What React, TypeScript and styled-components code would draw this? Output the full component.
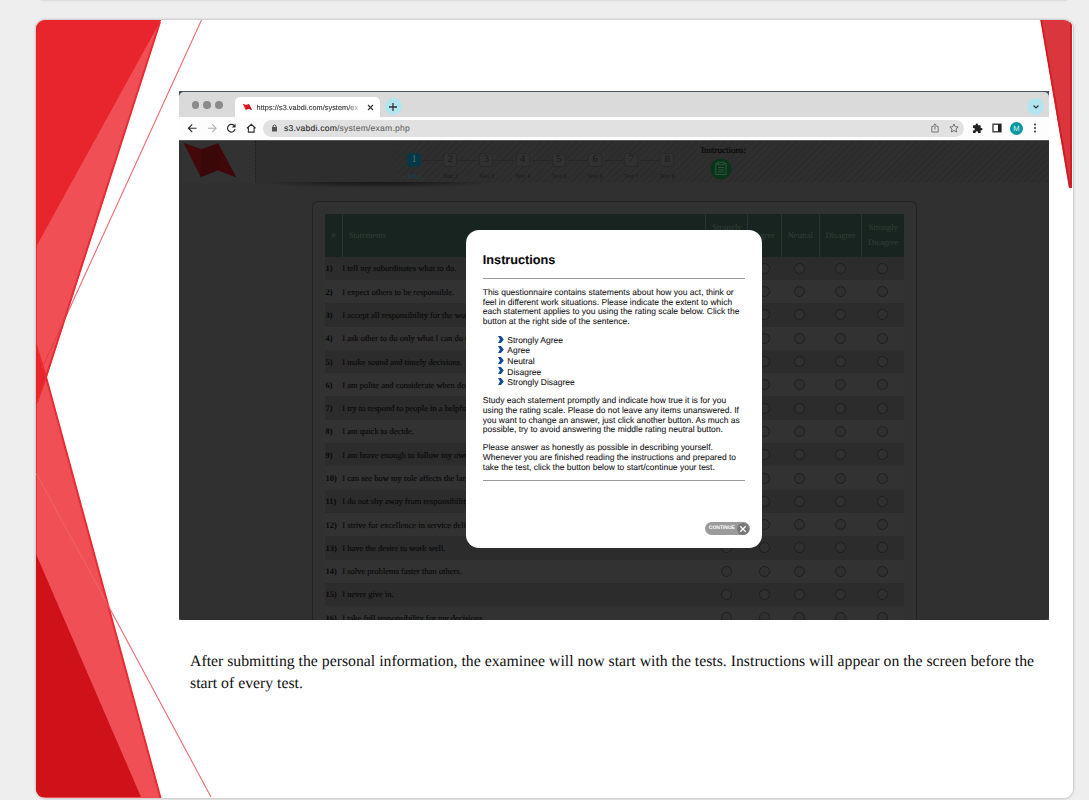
import React from "react";
import styled, { createGlobalStyle, css } from "styled-components";

const Global = createGlobalStyle`
  * { box-sizing: border-box; }
  body { margin: 0; background: #eeeeee; overflow: hidden; text-rendering: geometricPrecision; }
`;

const serif = css`font-family: "Liberation Serif", "Times New Roman", serif;`;
const sans = css`font-family: "Liberation Sans", Arial, sans-serif;`;

const Deck = styled.main`
  height: 800px;
  padding: 0 16px 0 35.5px;
  overflow: hidden;
  background: #eeeeee;
`;
const PreviousSlide = styled.div`
  height: 20px;
  &::before {
    content: "";
    display: block;
    height: 1px;
    margin: 0 6px 0 5px;
    background: #dedede;
    box-shadow: 0 0 2px #d8d8d8;
  }
`;
const Slide = styled.section`
  position: relative;
  height: 778px;
  padding: 70.5px 0 0 143.5px;
  border-radius: 9px;
  background: #fff;
  overflow: hidden;
`;
const SlideShadow = styled.div`
  border-radius: 9px;
  box-shadow: 0 0 3px rgba(0, 0, 0, 0.34);
`;
const Art = styled.svg`
  position: absolute;
  top: 0;
  left: -0.5px;
`;
const Browser = styled.div`
  position: relative;
  width: 870.4px;
  height: 529.5px;
  display: flex;
  flex-direction: column;
  background: #4a5561;
  padding-top: 1.5px;
  overflow: hidden;
`;
const TabBar = styled.div`
  display: flex;
  align-items: flex-end;
  height: 25px;
  background: #dadada;
  border-radius: 5px 5px 0 0;
  flex: none;
`;
const Lights = styled.div`
  display: flex;
  gap: 4.4px;
  padding: 0 12px 8.5px 12.5px;
  i { width: 7.6px; height: 7.6px; border-radius: 50%; background: #8b8b8b; }
`;
const Tab = styled.div`
  ${sans}
  display: flex;
  align-items: center;
  width: 145px;
  height: 20px;
  padding: 0 6px 0 8px;
  background: #fff;
  border-radius: 5px 5px 0 0;
  font-size: 7.3px;
  color: #333;
  svg:last-child { margin-left: auto; }
`;
const TabTitle = styled.span`
  margin-left: 4.5px;
  white-space: nowrap;
  letter-spacing: 0.06px;
  -webkit-text-stroke: 0.1px #333;
  mask-image: linear-gradient(to right, #000 90px, transparent 106px);
`;
const RoundButton = styled.div<{ $end?: boolean }>`
  display: flex;
  align-items: center;
  justify-content: center;
  width: 17px;
  height: 17px;
  border-radius: 50%;
  background: #b3e5f0;
  margin: ${(p) => (p.$end ? "0 5px 2px auto" : "0 0 2px 4.5px")};
`;
const Toolbar = styled.div`
  display: flex;
  align-items: center;
  height: 22.5px;
  flex: none;
  background: #fdfdfd;
  padding: 0 9px 0 8px;
`;
const NavIcons = styled.div`
  display: flex;
  gap: 9px;
  width: 76px;
  svg { width: 10.5px; height: 10.5px; }
`;
const Address = styled.div`
  ${sans}
  display: flex;
  align-items: center;
  width: 701px;
  height: 16.5px;
  padding: 0 5px 0 8px;
  border-radius: 9px;
  background: #e1e1e2;
  font-size: 8.6px;
  color: #666;
  b { font-weight: 400; color: #2c2c2c; }
  span { margin: 0 auto 0 6px; letter-spacing: 0.2px; -webkit-text-stroke: 0.1px currentColor; }
`;
const AddressIcons = styled.div`
  display: flex;
  gap: 9px;
`;
const ToolIcons = styled.div`
  display: flex;
  align-items: center;
  gap: 9px;
  margin-left: 8px;
`;
const Avatar = styled.div`
  ${sans}
  width: 13.5px;
  height: 13.5px;
  border-radius: 50%;
  background: #0b979f;
  color: #d7f5f5;
  font-size: 7.5px;
  line-height: 13.5px;
  text-align: center;
  margin: 0 1px 0 -1.5px;
`;
const Page = styled.div`
  ${serif}
  flex: 1;
  min-height: 0;
  background: #303030;
  border-top: 1px solid #555;
  border-radius: 0 0 4px 4px;
  overflow: hidden;
`;
const SiteHeader = styled.header`
  display: flex;
  height: 42px;
  background: linear-gradient(to right, #323232 0 76px, #2e2e2e 77px);
`;
const Brand = styled.div`
  width: 77px;
  padding: 2px 0 0 5px;
  border-right: 1px dotted #1c1c1c;
`;
const Plain = styled.div`
  position: relative;
  width: 140px;
  &::after {
    content: "";
    position: absolute;
    left: 1px;
    top: 41px;
    width: 240px;
    height: 6px;
    background: radial-gradient(ellipse 50% 100% at 50% 0, #161616, #222 50%, transparent);
  }
`;
const Striped = styled.div`
  display: flex;
  flex: 1;
  background: repeating-linear-gradient(135deg, #2f2f2f 0 2px, #2c2c2c 3px 4px, #2f2f2f 5px);
`;
const Steps = styled.div`
  display: flex;
  width: 304px;
  padding: 12.4px 0 0 0;
`;
const Step = styled.div<{ $on?: boolean }>`
  position: relative;
  width: 36.2px;
  flex: none;
  text-align: center;
  font-size: 6.2px;
  line-height: 8px;
  color: ${(p) => (p.$on ? "#0c4a60" : "#1b1b1b")};
  b {
    display: block;
    width: 14px;
    height: 14px;
    margin: 0 auto 6px;
    border-radius: 3px;
    border: 1px solid ${(p) => (p.$on ? "#083848" : "#282828")};
    background: ${(p) => (p.$on ? "#083848" : "#313131")};
    color: ${(p) => (p.$on ? "#4a6c77" : "#1a1a1a")};
    font-size: 10.5px;
    font-weight: 400;
    line-height: 12px;
  }
  &:not(:last-child)::after {
    content: "";
    position: absolute;
    left: 27px;
    top: 7px;
    width: 19px;
    height: 1px;
    background: #272727;
  }
`;
const Help = styled.div`
  display: flex;
  flex-direction: column;
  align-items: center;
  width: 47px;
  padding-top: 4.6px;
  font-size: 9px;
  line-height: 11px;
  color: #080808;
  -webkit-text-stroke: 0.2px #080808;
  svg { margin: 2px 5px 0 0; }
`;
const Panel = styled.div`
  width: 605px;
  height: 500px;
  margin: 18.2px 0 0 133px;
  padding: 12px 12px;
  border: 1px solid #222;
  border-radius: 6px;
  background: #313131;
`;
const columns = css`
  display: grid;
  grid-template-columns: 16.7px 363.6px 42.2px 33.5px 38px 42.5px 42.5px;
`;
const HeadRow = styled.div`
  ${columns}
  height: 43px;
  background: #18241f;
  color: #34403b;
  font-size: 8.5px;
  line-height: 15px;
`;
const HeadCell = styled.div<{ $left?: boolean }>`
  display: flex;
  align-items: center;
  justify-content: ${(p) => (p.$left ? "flex-start" : "center")};
  padding-left: ${(p) => (p.$left ? "6px" : "0")};
  text-align: center;
  border-left: 1px solid #2a3531;
  &:first-child { border-left: 0; }
`;
const Row = styled.div<{ $odd: boolean }>`
  ${columns}
  height: 23.3px;
  align-items: center;
  background: ${(p) => (p.$odd ? "#2c2c2c" : "#323232")};
  color: #090909;
  font-size: 8.5px;
  white-space: nowrap;
  b { padding-left: 0.5px; }
  span { padding-left: 0.6px; -webkit-text-stroke: 0.12px #090909; }
`;
const Radio = styled.i`
  justify-self: center;
  width: 11px;
  height: 11px;
  border: 1px solid #1f1f1f;
  border-radius: 50%;
  background: #303030;
`;
const Modal = styled.div`
  ${sans}
  position: absolute;
  left: 286.8px;
  top: 139.5px;
  width: 296.2px;
  height: 317.5px;
  padding: 22.5px 17px 0 17px;
  border-radius: 13px;
  background: #fff;
  color: #1c1c1c;
  font-size: 8.49px;
  line-height: 9.7px;
  -webkit-text-stroke: 0.1px #1c1c1c;
  h1 { margin: 0 0 10px; font-size: 12.7px; line-height: 15px; color: #0a0a0a; }
`;
const Rule = styled.hr<{ $top?: number }>`
  height: 1px;
  margin: ${(p) => p.$top ?? 0}px 0 0;
  border: 0;
  background: #9a9a9a;
`;
const Paragraph = styled.p<{ $top?: number }>`
  margin: ${(p) => p.$top ?? 0}px 0 0;
  white-space: nowrap;
`;
const Scale = styled.ul`
  margin: 8px 0 8.4px;
  padding: 0 0 0 15.5px;
  list-style: none;
  line-height: 10.6px;
  li { display: flex; align-items: center; gap: 3px; }
  svg { margin-top: -2px; }
`;
const Continue = styled.div`
  display: flex;
  align-items: center;
  justify-content: space-between;
  width: 45.5px;
  height: 13.5px;
  margin: 40.5px 0 0 222px;
  padding: 0 1px 0 4px;
  border-radius: 7px;
  background: #9b9b9b;
  color: #fff;
  font-size: 5px;
  font-weight: 700;
  -webkit-text-stroke: 0;
`;
const Caption = styled.p`
  ${serif}
  margin: 31px 0 0 11px;
  font-size: 15.78px;
  line-height: 22px;
  color: #111;
  white-space: nowrap;
`;

const statements = [
  "I tell my subordinates what to do.",
  "I expect others to be responsible.",
  "I accept all responsibility for the work.",
  "I ask other to do only what I can do myself.",
  "I make sound and timely decisions.",
  "I am polite and considerate when dealing.",
  "I try to respond to people in a helpful way.",
  "I am quick to decide.",
  "I am brave enough to follow my own way.",
  "I can see how my role affects the larger team.",
  "I do not shy away from responsibility.",
  "I strive for excellence in service delivery.",
  "I have the desire to work well.",
  "I solve problems faster than others.",
  "I never give in.",
  "I take full responsibility for my decisions.",
];

const scale = ["Strongly Agree", "Agree", "Neutral", "Disagree", "Strongly Disagree"];

function SlideArt() {
  return (
    <Art width="1038" height="778" viewBox="35 20 1038 778">
      <path d="M35 20H161L46.5 378L161 798H35Z" fill="#ef4f55" />
      <path d="M35 20H161L36 247H35Z" fill="#e8252d" />
      <path d="M36 345L46.5 378L37 404H35Z" fill="#e8252d" />
      <path d="M160 22L46 377L37 402" fill="none" stroke="#ea2b33" strokeWidth="2" />
      <path d="M36 345L46 377L160.5 798" fill="none" stroke="#ea2b33" strokeWidth="2" />
      <path d="M36 20V798" stroke="#eb2029" strokeWidth="1.4" />
      <path d="M35 553L36 554L141 797H35Z" fill="#cf1219" />
      <path d="M201.5 20L68 312" stroke="#ee6a70" strokeWidth="1.1" />
      <path d="M68 312L42 368" stroke="#ea3b43" strokeWidth="1" />
      <path d="M36 473L109 607" stroke="#f06468" strokeWidth="1" />
      <path d="M109 607L211 797" stroke="#ee6a70" strokeWidth="1.1" />
      <path d="M1040.500 19H1072V188H1069Z" fill="#d9363d" />
      <path d="M1041 19L1070 187.500M1071 19V188" fill="none" stroke="#d41a22" strokeWidth="1.800" />
    </Art>
  );
}

function Bird({ size, dark }: { size: number; dark?: boolean }) {
  return (
    <svg width={size} height={size * 0.66} viewBox="0 0 52 34">
      <path d="M0 0L17 6L34 0L52 34L34 27L17 34Z" fill={dark ? "#3a0808" : "#e0141c"} />
      <path d="M17 6V34L0 0Z" fill={dark ? "#430809" : "#f0252c"} />
      <path d="M34 0L52 34L34 27Z" fill={dark ? "#400708" : "#c90e16"} />
    </svg>
  );
}

const line = { fill: "none", stroke: "#333", strokeWidth: 1.3 } as const;

export default function App() {
  return (
    <>
      <Global />
      <Deck>
        <PreviousSlide />
        <SlideShadow>
          <Slide>
            <SlideArt />
            <Browser>
              <TabBar>
                <Lights><i /><i /><i /></Lights>
                <Tab>
                  <Bird size={9} />
                  <TabTitle>https://s3.vabdi.com/system/ex</TabTitle>
                  <svg width="7" height="7" viewBox="0 0 7 7"><path d="M1 1L6 6M6 1L1 6" {...line} strokeWidth={1.1} /></svg>
                </Tab>
                <RoundButton>
                  <svg width="8" height="8" viewBox="0 0 8 8"><path d="M4 0V8M0 4H8" {...line} /></svg>
                </RoundButton>
                <RoundButton $end>
                  <svg width="6" height="4" viewBox="0 0 6 4"><path d="M.5 .5L3 3L5.500 .5" {...line} strokeWidth={1.2} /></svg>
                </RoundButton>
              </TabBar>
              <Toolbar>
                <NavIcons>
                  <svg viewBox="0 0 11 11"><path d="M10 5.500H1.500M5.500 1.500L1.500 5.500L5.500 9.500" {...line} /></svg>
                  <svg viewBox="0 0 11 11"><path d="M1 5.500H9.500M5.500 1.500L9.500 5.500L5.500 9.500" {...line} stroke="#aaa" strokeWidth={1.1} /></svg>
                  <svg viewBox="0 0 11 11"><path d="M9 3.300A4 4 0 1 0 9.500 6.500" {...line} /><path d="M10 .8V4.800H6Z" fill="#333" /></svg>
                  <svg viewBox="0 0 11 11"><path d="M1 5.500L5.500 1.400L10 5.500M2.500 4.500V9.500H8.500V4.500" {...line} strokeWidth={1.2} /></svg>
                </NavIcons>
                <Address>
                  <svg width="7" height="8" viewBox="0 0 7 8"><rect x="1" y="3" width="5" height="4.500" fill="#555" /><path d="M2 3V1.800Q3.500 -.2 5 1.800V3" fill="none" stroke="#555" /></svg>
                  <span><b>s3.vabdi.com</b>/system/exam.php</span>
                  <AddressIcons>
                    <svg width="10" height="10" viewBox="0 0 10 10"><path d="M3.500 3.500H1.800V9H8.200V3.500H6.500M5 6.500V1M3.200 2.600L5 .8L6.800 2.600" fill="none" stroke="#777" /></svg>
                    <svg width="10" height="10" viewBox="0 0 10 10"><path d="M5 1L6.200 3.700L9.200 4L7 6L7.600 9L5 7.500L2.400 9L3 6L.8 4L3.800 3.700Z" fill="none" stroke="#666" strokeWidth=".9" /></svg>
                  </AddressIcons>
                </Address>
                <ToolIcons>
                  <svg width="11" height="11" viewBox="0 0 24 24"><path fill="#222" d="M20.500 11H19V7a2 2 0 0 0-2-2h-4V3.500a2.500 2.500 0 0 0-5 0V5H4a2 2 0 0 0-2 2v3.800h1.500a2.700 2.700 0 0 1 0 5.400H2V20a2 2 0 0 0 2 2h3.800v-1.500a2.700 2.700 0 0 1 5.400 0V22H17a2 2 0 0 0 2-2v-4h1.500a2.500 2.500 0 0 0 0-5" /></svg>
                  <svg width="10" height="10" viewBox="0 0 10 10"><rect x="1" y="1.200" width="8" height="7.600" {...line} /><path d="M6 1H9V9H6Z" fill="#222" /></svg>
                  <Avatar>M</Avatar>
                  <svg width="4" height="10" viewBox="0 0 4 10" fill="#333"><circle cx="2" cy="1.500" r="1" /><circle cx="2" cy="5" r="1" /><circle cx="2" cy="8.500" r="1" /></svg>
                </ToolIcons>
              </Toolbar>
              <Page>
                <SiteHeader>
                  <Brand><Bird size={52} dark /></Brand>
                  <Plain />
                  <Striped>
                    <Steps>
                      {[1, 2, 3, 4, 5, 6, 7, 8].map((n) => (
                        <Step key={n} $on={n === 1}><b>{n}</b>Test {n}</Step>
                      ))}
                    </Steps>
                    <Help>
                      Instructions:
                      <svg width="22" height="22" viewBox="0 0 22 22">
                        <circle cx="11" cy="11" r="10.500" fill="#08351a" />
                        <path d="M8 5.500H5.800V16.500H16V5.500H13.800M8 4.300H13.800V6.700H8ZM8 9.500H14M8 11.700H14M8 14H14" fill="none" stroke="#30513a" strokeWidth="1.100" />
                      </svg>
                    </Help>
                  </Striped>
                </SiteHeader>
                <Panel>
                  <HeadRow>
                    <HeadCell>#</HeadCell>
                    <HeadCell $left>Statements</HeadCell>
                    <HeadCell>Strongly<br />Agree</HeadCell>
                    <HeadCell>Agree</HeadCell>
                    <HeadCell>Neutral</HeadCell>
                    <HeadCell>Disagree</HeadCell>
                    <HeadCell>Strongly<br />Disagree</HeadCell>
                  </HeadRow>
                  {statements.map((text, i) => (
                    <Row key={text} $odd={i % 2 === 0}>
                      <b>{i + 1})</b>
                      <span>{text}</span>
                      {scale.map((s) => <Radio key={s} />)}
                    </Row>
                  ))}
                </Panel>
              </Page>
              <Modal>
                <h1>Instructions</h1>
                <Rule />
                <Paragraph $top={9.5}>
                  This questionnaire contains statements about how you act, think or<br />
                  feel in different work situations. Please indicate the extent to which<br />
                  each statement applies to you using the rating scale below. Click the<br />
                  button at the right side of the sentence.
                </Paragraph>
                <Scale>
                  {scale.map((s) => (
                    <li key={s}>
                      <svg width="6" height="7" viewBox="0 0 6 7"><path d="M0 0H3L5.800 3.500L3 7H0L2 3.500Z" fill="#134a9c" /></svg>
                      {s}
                    </li>
                  ))}
                </Scale>
                <Paragraph>
                  Study each statement promptly and indicate how true it is for you<br />
                  using the rating scale. Please do not leave any items unanswered. If<br />
                  you want to change an answer, just click another button. As much as<br />
                  possible, try to avoid answering the middle rating neutral button.
                </Paragraph>
                <Paragraph $top={8.4}>
                  Please answer as honestly as possible in describing yourself.<br />
                  Whenever you are finished reading the instructions and prepared to<br />
                  take the test, click the button below to start/continue your test.
                </Paragraph>
                <Rule $top={7.8} />
                <Continue>
                  CONTINUE
                  <svg width="12" height="12" viewBox="0 0 12 12"><circle cx="6" cy="6" r="6" fill="#777" /><path d="M3.300 3.300L8.700 8.700M8.700 3.300L3.300 8.700" stroke="#fff" strokeWidth="1.300" /></svg>
                </Continue>
              </Modal>
            </Browser>
            <Caption>
              After submitting the personal information, the examinee will now start with the tests. Instructions will appear on the screen before the<br />
              start of every test.
            </Caption>
          </Slide>
        </SlideShadow>
      </Deck>
    </>
  );
}
